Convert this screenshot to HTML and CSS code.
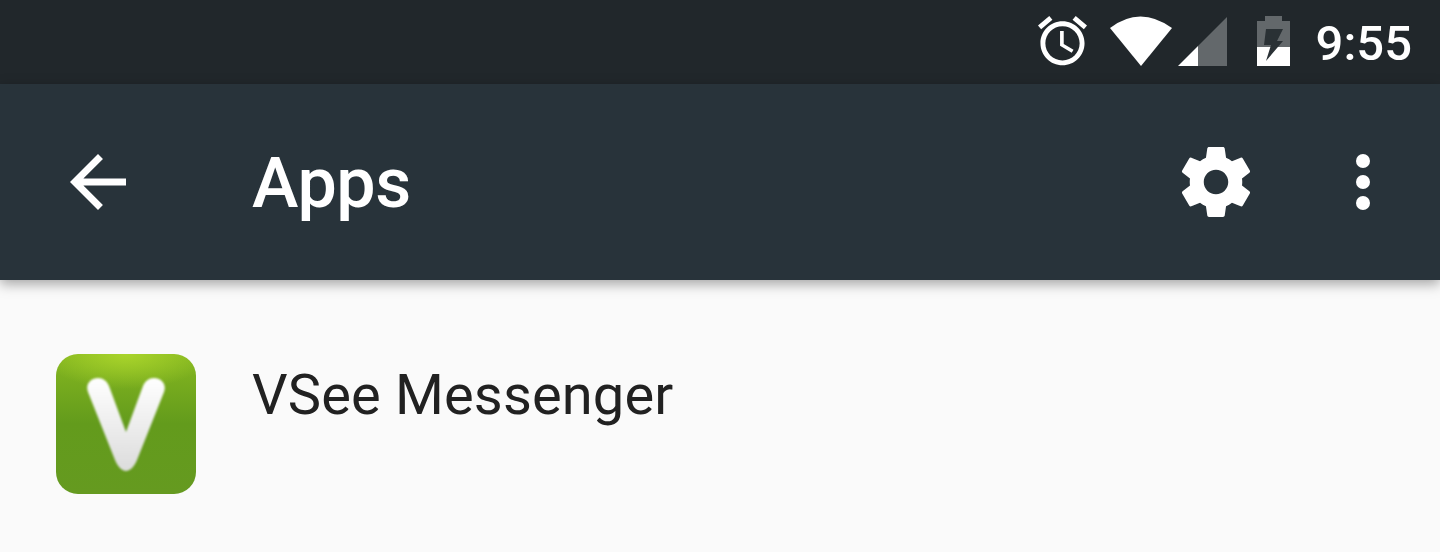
FILE: index.html
```html
<!DOCTYPE html>
<html lang="en">
<head>
    <meta charset="UTF-8">
    <meta name="viewport" content="width=device-width, initial-scale=1.0">
    <title>Apps</title>
    <link rel="stylesheet" href="styles.css">
</head>
<body>
    <div class="status_bar">
        <svg class="ic_alarm" viewBox="2 1.86 20 20.4" preserveAspectRatio="none">
            <path fill="#fff" d="M22 5.72l-4.6-3.86-1.29 1.53 4.6 3.86L22 5.72zM7.88 3.39L6.6 1.86 2 5.71l1.29 1.53 4.59-3.85zM12.5 8H11v6l4.75 2.85.75-1.23-4-2.37V8zM12 4c-4.97 0-9 4.03-9 9s4.03 9 9 9 9-4.03 9-9-4.03-9-9-9zm0 16c-3.87 0-7-3.13-7-7s3.13-7 7-7 7 3.13 7 7-3.13 7-7 7z"/>
        </svg>
        <svg class="ic_wifi" viewBox="0 0 62 50">
            <path fill="#fff" d="M0 12Q30-11 62 12L31 50z"/>
        </svg>
        <svg class="ic_signal" viewBox="0 0 49 50">
            <path fill="#63686b" d="M49 1V50H20V30z"/>
            <path fill="#fff" d="M0 50L20 30V50z"/>
        </svg>
        <svg class="ic_battery" viewBox="0 0 33 50">
            <path fill="#63686b" d="M8 0H25V5H33V31H0V5H8z"/>
            <rect fill="#fff" y="31" width="33" height="19"/>
            <path fill="#2a3135" d="M9 13H26L20 25H26L9 45L14 29H7z"/>
        </svg>
        <span class="time">9:55</span>
    </div>

    <div class="toolbar">
        <svg class="ic_big" viewBox="0 0 24 24">
            <path fill="#fff" d="M20 11H7.83l5.59-5.59L12 4l-8 8 8 8 1.41-1.41L7.83 13H20v-2z"/>
        </svg>
        <div class="title">Apps</div>
        <svg class="ic_big ic_gear" viewBox="0 0 24 24">
            <path fill="#fff" d="M19.43 12.98c.04-.32.07-.64.07-.98s-.03-.66-.07-.98l2.11-1.65c.19-.15.24-.42.12-.64l-2-3.46c-.12-.22-.39-.3-.61-.22l-2.49 1c-.52-.4-1.08-.73-1.69-.98l-.38-2.65C14.46 2.18 14.25 2 14 2h-4c-.25 0-.46.18-.49.42l-.38 2.65c-.61.25-1.17.59-1.69.98l-2.49-1c-.23-.09-.49 0-.61.22l-2 3.46c-.13.22-.07.49.12.64l2.11 1.65c-.04.32-.07.65-.07.98s.03.66.07.98l-2.11 1.65c-.19.15-.24.42-.12.64l2 3.46c.12.22.39.3.61.22l2.49-1c.52.4 1.08.73 1.69.98l.38 2.65c.03.24.24.42.49.42h4c.25 0 .46-.18.49-.42l.38-2.65c.61-.25 1.17-.59 1.69-.98l2.49 1c.23.09.49 0 .61-.22l2-3.46c.12-.22.07-.49-.12-.64l-2.11-1.65zM12 15.5c-1.93 0-3.5-1.57-3.5-3.5s1.57-3.5 3.5-3.5 3.5 1.57 3.5 3.5-1.57 3.5-3.5 3.5z"/>
        </svg>
        <svg class="ic_big ic_more" viewBox="0 0 24 24">
            <circle fill="#fff" cx="12" cy="6" r="2"/>
            <circle fill="#fff" cx="12" cy="12" r="2"/>
            <circle fill="#fff" cx="12" cy="18" r="2"/>
        </svg>
    </div>

    <div class="app_row">
        <div class="app_icon">
            <svg class="ic_v" viewBox="0 0 140 140">
                <defs>
                    <linearGradient id="v_grad" x1="0" y1="0" x2="0" y2="1">
                        <stop offset="0" stop-color="#ffffff"/>
                        <stop offset="1" stop-color="#dcdcdc"/>
                    </linearGradient>
                </defs>
                <path fill="url(#v_grad)" d="M42 24C35 24 29 30 32 38L59 106C62 113 66 117 70 117C74 117 78 113 81 106L108 38C111 30 105 24 98 24C93 24 89 27 87 32L70 78L53 32C51 27 47 24 42 24z"/>
            </svg>
        </div>
        <div class="app_name">VSee Messenger</div>
    </div>
</body>
</html>
```

FILE: styles.css
```css
body
{
    margin: 0;
    height: 552px;
    overflow: hidden;
    background-color: #fafafa;
    font-family: Roboto, "Liberation Sans", sans-serif;
}
.status_bar
{
    height: 84px;
    box-sizing: border-box;
    padding: 16px 28px 0 0;
    display: flex;
    justify-content: flex-end;
    align-items: flex-start;
    background-color: #21272b;
}
.status_bar svg
{
    height: 50px;
    display: block;
}
.ic_alarm
{
    width: 49px;
}
.ic_wifi
{
    width: 62px;
    margin-left: 23px;
}
.ic_signal
{
    width: 49px;
    margin-left: 6px;
}
.ic_battery
{
    width: 33px;
    margin-left: 30px;
}
.time
{
    margin-left: 26px;
    font-size: 49px;
    font-weight: 500;
    line-height: 56px;
    color: white;
}
.toolbar
{
    height: 196px;
    box-sizing: border-box;
    padding: 0 35px 0 56px;
    display: flex;
    align-items: center;
    background-color: #28333a;
    box-shadow: 0 4px 12px rgba(0, 0, 0, 0.35);
}
.ic_big
{
    width: 84px;
    height: 84px;
    flex: none;
}
.title
{
    margin: 2px 0 0 112px;
    font-size: 70px;
    font-weight: 500;
    letter-spacing: -0.4px;
    color: white;
}
.ic_gear
{
    margin-left: auto;
}
.ic_more
{
    margin-left: 63px;
}
.app_row
{
    padding: 74px 0 0 56px;
    display: flex;
    align-items: flex-start;
}
.app_icon
{
    width: 140px;
    height: 140px;
    flex: none;
    border-radius: 22px;
    overflow: hidden;
    background: radial-gradient(ellipse 60% 25% at 50% 0, #a9d42b, rgba(169, 212, 43, 0) 100%), linear-gradient(#86b720, #639b1c 50%, #659a20);
}
.ic_v
{
    display: block;
    filter: blur(1px);
}
.app_name
{
    margin: 8px 0 0 56px;
    font-size: 56px;
    line-height: 66px;
    letter-spacing: 0.15px;
    color: #212121;
}
```
